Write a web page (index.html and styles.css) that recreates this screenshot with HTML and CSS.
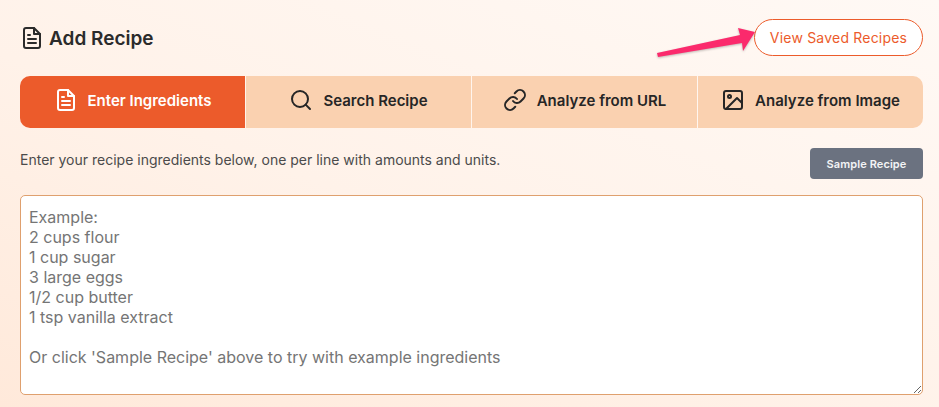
FILE: index.html
```html
<!DOCTYPE html>
<html lang="en">
<head>
  <meta charset="UTF-8">
  <meta name="viewport" content="width=device-width, initial-scale=1.0">
  <title>Add Recipe</title>
  <link rel="stylesheet" href="styles.css">
</head>
<body>
  <div class="recipe-page">
    <header class="recipe-header">
      <h1 class="recipe-title">
        <svg class="icon" viewBox="0 0 24 24" fill="none" stroke="currentColor" stroke-width="2" stroke-linecap="round" stroke-linejoin="round">
          <path d="M14 2H6a2 2 0 0 0-2 2v16a2 2 0 0 0 2 2h12a2 2 0 0 0 2-2V8z"/>
          <path d="M14 2v6h6M16 13H8M16 17H8M10 9H8"/>
        </svg>
        Add Recipe
      </h1>
      <button type="button" class="saved-button">View Saved Recipes</button>
    </header>

    <!-- Input mode tabs -->
    <nav class="mode-tabs">
      <button type="button" class="mode-tab active">
        <svg class="icon" viewBox="0 0 24 24" fill="none" stroke="currentColor" stroke-width="2" stroke-linecap="round" stroke-linejoin="round">
          <path d="M14 2H6a2 2 0 0 0-2 2v16a2 2 0 0 0 2 2h12a2 2 0 0 0 2-2V8z"/>
          <path d="M14 2v6h6M16 13H8M16 17H8M10 9H8"/>
        </svg>
        Enter Ingredients
      </button>
      <button type="button" class="mode-tab">
        <svg class="icon" viewBox="0 0 24 24" fill="none" stroke="currentColor" stroke-width="2" stroke-linecap="round" stroke-linejoin="round">
          <circle cx="11" cy="11" r="8"/>
          <path d="M21 21l-4.35-4.35"/>
        </svg>
        Search Recipe
      </button>
      <button type="button" class="mode-tab">
        <svg class="icon" viewBox="0 0 24 24" fill="none" stroke="currentColor" stroke-width="2" stroke-linecap="round" stroke-linejoin="round">
          <path d="M10 13a5 5 0 0 0 7.54.54l3-3a5 5 0 0 0-7.07-7.07l-1.72 1.71"/>
          <path d="M14 11a5 5 0 0 0-7.54-.54l-3 3a5 5 0 0 0 7.07 7.07l1.71-1.71"/>
        </svg>
        Analyze from URL
      </button>
      <button type="button" class="mode-tab">
        <svg class="icon" viewBox="0 0 24 24" fill="none" stroke="currentColor" stroke-width="2" stroke-linecap="round" stroke-linejoin="round">
          <rect x="3" y="3" width="18" height="18" rx="2"/>
          <circle cx="8.5" cy="8.5" r="1.5"/>
          <path d="M21 15l-5-5L5 21"/>
        </svg>
        Analyze from Image
      </button>
    </nav>

    <div class="hint-row">
      <p class="hint-text">Enter your recipe ingredients below, one per line with amounts and units.</p>
      <button type="button" class="sample-button">Sample Recipe</button>
    </div>

    <textarea class="ingredients-input" placeholder="Example:&#10;2 cups flour&#10;1 cup sugar&#10;3 large eggs&#10;1/2 cup butter&#10;1 tsp vanilla extract&#10;&#10;Or click 'Sample Recipe' above to try with example ingredients"></textarea>
  </div>

  <!-- Annotation arrow drawn over the screenshot -->
  <svg class="callout-arrow" viewBox="0 0 939 407" aria-hidden="true">
    <polygon points="657,53 740,35 738,28 755,32 743,51 742,43 658,57"/>
  </svg>
</body>
</html>
```

FILE: styles.css
```css
:root {
  --color-accent: #ec5b2b;
  --color-tab: #fad1b0;
  --color-text: #262626;
  --font-body: "Inter", Arial, sans-serif;
}

* {
  box-sizing: border-box;
  margin: 0;
  padding: 0;
}

body {
  position: relative;
  height: 407px;
  overflow: hidden;
  background: linear-gradient(22deg, #ffe9da 0%, #fff2e9 45%, #fff9f5 100%);
  color: var(--color-text);
  font-family: var(--font-body);
}

.recipe-page {
  padding: 19px 16px 0 20px;
}

/* Header */
.recipe-header {
  display: flex;
  align-items: center;
  justify-content: space-between;
  height: 37px;
}

.recipe-title {
  display: flex;
  align-items: center;
  gap: 5px;
  padding-top: 1px;
  font-size: 19px;
  font-weight: 600;
  color: #2b2b2b;
}

.saved-button {
  width: 169px;
  height: 37px;
  border: 1px solid var(--color-accent);
  border-radius: 19px;
  background-color: #fff;
  color: var(--color-accent);
  font-family: var(--font-body);
  font-size: 14px;
  letter-spacing: 0.2px;
}

.icon {
  width: 24px;
  height: 24px;
  flex-shrink: 0;
}

/* Tabs */
.mode-tabs {
  display: grid;
  grid-template-columns: repeat(4, 1fr);
  gap: 1px;
  height: 52px;
  margin-top: 20px;
  border-radius: 10px;
  overflow: hidden;
}

.mode-tab {
  display: flex;
  align-items: center;
  justify-content: center;
  gap: 10px;
  padding-bottom: 4px;
  border: none;
  background-color: var(--color-tab);
  color: var(--color-text);
  font-family: var(--font-body);
  font-size: 15px;
  font-weight: 600;
}

.mode-tab.active {
  background-color: var(--color-accent);
  color: #fff;
}

/* Hint row */
.hint-row {
  display: flex;
  align-items: center;
  justify-content: space-between;
  margin-top: 20px;
}

.hint-text {
  padding-bottom: 8px;
  font-size: 14px;
  color: #4b4b4b;
}

.sample-button {
  width: 113px;
  height: 31px;
  border: none;
  border-radius: 4px;
  background-color: #6b7280;
  color: #f3f4f6;
  font-family: var(--font-body);
  font-size: 11px;
  font-weight: 600;
  letter-spacing: 0.1px;
}

/* Textarea */
.ingredients-input {
  display: block;
  width: 100%;
  height: 200px;
  margin-top: 16px;
  padding: 11px 8px;
  border: 1px solid #dfa06e;
  border-radius: 5px;
  background-color: #fff;
  font-family: var(--font-body);
  font-size: 16px;
  line-height: 20px;
  outline: none;
}

.ingredients-input::placeholder {
  color: #757575;
  opacity: 1;
}

/* Annotation */
.callout-arrow {
  position: absolute;
  top: 0;
  left: 0;
  width: 939px;
  height: 407px;
  pointer-events: none;
  filter: drop-shadow(0 1px 1px rgba(0, 0, 0, 0.25));
}

.callout-arrow polygon {
  fill: #fb2a6c;
}
```
